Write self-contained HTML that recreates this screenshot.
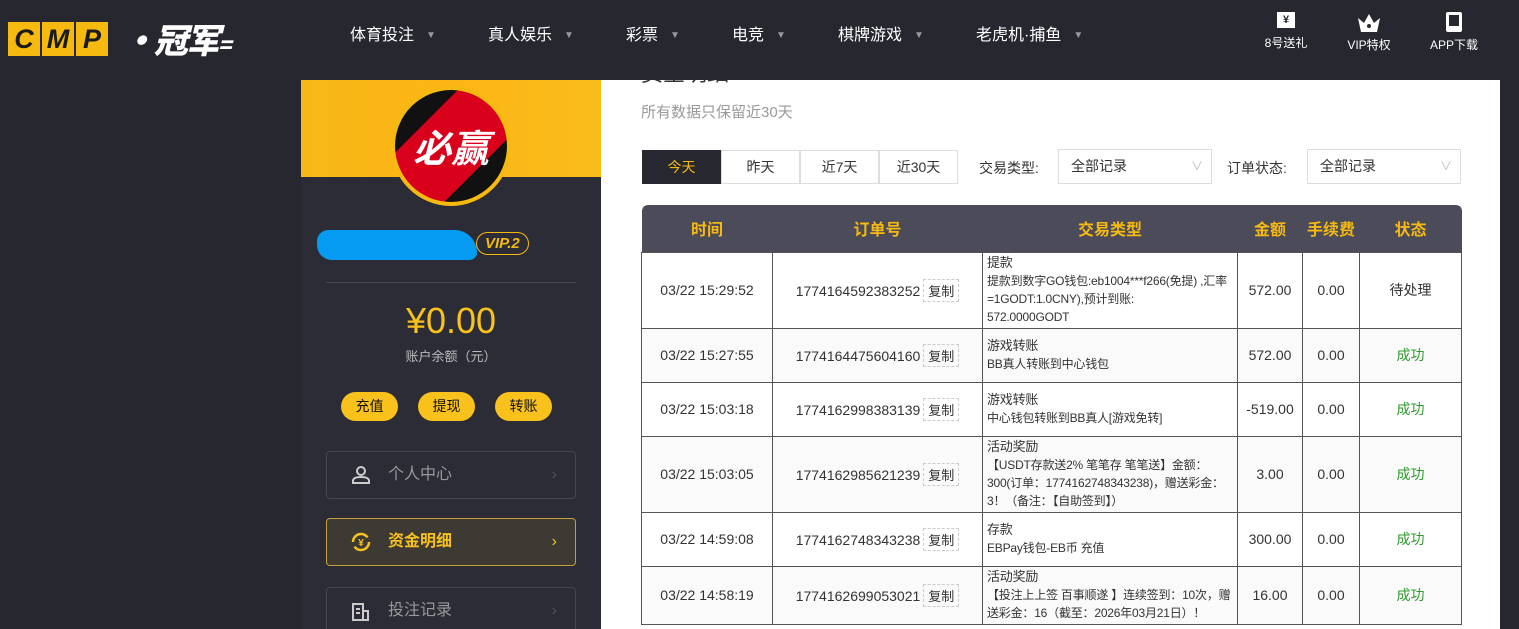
<!DOCTYPE html>
<html><head><meta charset="utf-8"><style>
*{margin:0;padding:0;box-sizing:border-box}
body{width:1519px;height:629px;overflow:hidden;background:#26272f;font-family:"Liberation Sans","Noto Sans CJK SC",sans-serif;position:relative}
.hdr{position:absolute;left:0;top:0;width:1519px;height:80px;background:#26272f;z-index:5}
.logo{position:absolute;left:8px;top:14px;display:flex;align-items:center}
.logo span.b{display:inline-block;width:32px;height:34px;background:#f5b910;margin-right:2px;color:#1a1a1a;font:italic bold 27px "Liberation Sans",sans-serif;text-align:center;line-height:34px}
.logo .t{color:#fff;font:italic 900 34px "Noto Sans CJK SC",sans-serif;margin-left:12px;letter-spacing:-2px}
.nav{position:absolute;top:21px;color:#fff;font-size:16px}
.nav i{font-style:normal;color:#999;font-size:10px;margin-left:12px;vertical-align:2px}
.ri{position:absolute;top:12px;color:#fff;font-size:12px;text-align:center;width:70px}
.side{position:absolute;left:301px;top:80px;width:300px;height:549px;background:#2b2c35;overflow:hidden}
.ban{height:97px;background:linear-gradient(90deg,#f7b817,#fdb515 50%,#f9bd1b)}
.av{position:absolute;left:90px;top:6px;width:120px;height:120px;border-radius:50%;background:#f5b910;padding:4px}
.av div{width:112px;height:112px;border-radius:50%;background:linear-gradient(135deg,#111 0 28%,#d9001b 28% 72%,#111 72%);color:#fff;font:italic bold 38px "Noto Sans CJK SC",sans-serif;text-align:center;line-height:112px}
.name{position:absolute;left:16px;top:150px;width:160px;height:30px;background:#069bf3;border-radius:15px 30px 10px 20px}
.vip{position:absolute;left:175px;top:152px;border:1px solid #f5b910;border-radius:12px;color:#f5b910;font:italic bold 15px "Liberation Sans";padding:2px 8px}
.line{position:absolute;left:25px;top:202px;width:250px;height:1px;background:#45464f}
.bal{position:absolute;left:0;width:300px;text-align:center}
.btn{position:absolute;top:312px;width:57px;height:29px;border-radius:15px;background:#f8c11c;font-size:14px;line-height:29px;text-align:center;color:#111}
.mi{position:absolute;left:25px;width:250px;height:48px;border:1px solid #45464f;border-radius:4px;color:#999;font-size:16px;line-height:46px;padding-left:61px}
.mi b{position:absolute;right:18px;font-weight:normal;color:#555}
.main{position:absolute;left:601px;top:80px;width:899px;height:549px;background:#fff;overflow:hidden}
.tt{position:absolute;left:40px;top:-24px;font-size:22px;color:#333}
.sub{position:absolute;left:40px;top:21px;font-size:15px;color:#999}
.tab{position:absolute;top:70px;height:34px;width:79px;border:1px solid #ddd;text-align:center;line-height:32px;font-size:14px;color:#333}
.lbl{position:absolute;top:78px;font-size:14px;color:#333}
.sel{position:absolute;top:69px;width:154px;height:35px;border:1px solid #ddd;font-size:14px;color:#333;line-height:33px;padding-left:12px}
.sel:after{content:"\2228";position:absolute;right:8px;color:#bbb;font-size:12px}
table{position:absolute;left:40px;top:125px;width:821px;border-collapse:collapse;font-size:14px;color:#333}
th{background:#4b4b59;color:#f5b910;font-size:16px;height:47px;font-weight:bold}
td{border:1px solid #555;text-align:center}
td.d{text-align:left;font-size:12px;line-height:18px;padding:1px 4px;letter-spacing:-0.2px}
td.d span{font-size:13px}
.cp{display:inline-block;border:1px dashed #ccc;padding:1px 4px;margin-left:3px;font-size:13px}
.ok{color:#2d9b2d}
</style></head><body>
<div class="hdr">
<div class="logo"><span class="b">C</span><span class="b">M</span><span class="b">P</span><span class="t">·冠军<span style="font-size:22px">=</span></span></div>
<div class="nav" style="left:350px">体育投注<i>▼</i></div>
<div class="nav" style="left:488px">真人娱乐<i>▼</i></div>
<div class="nav" style="left:626px">彩票<i>▼</i></div>
<div class="nav" style="left:732px">电竞<i>▼</i></div>
<div class="nav" style="left:838px">棋牌游戏<i>▼</i></div>
<div class="nav" style="left:976px">老虎机·捕鱼<i>▼</i></div>
<div class="ri" style="left:1251px"><div style="width:18px;height:16px;background:#fff;margin:0 auto 6px;color:#26272f;font-size:11px;line-height:16px;font-weight:bold">¥</div>8号送礼</div>
<div class="ri" style="left:1334px"><svg width="26" height="22" viewBox="0 0 26 22" style="display:block;margin:0 auto 2px"><path d="M2 6l6 5 5-9 5 9 6-5-3 14H5z" fill="#fff"/><circle cx="13" cy="14" r="2" fill="#26272f"/></svg>VIP特权</div>
<div class="ri" style="left:1419px"><div style="width:16px;height:20px;border:3px solid #fff;border-bottom-width:6px;margin:0 auto 4px;border-radius:2px"></div>APP下载</div>
</div>
<div class="side">
<div class="ban"></div>
<div class="av"><div>必赢</div></div>
<div class="name"></div>
<div class="vip">VIP.2</div>
<div class="line"></div>
<div class="bal" style="top:220px;color:#f8c11c;font-size:36px">¥0.00</div>
<div class="bal" style="top:266px;color:#bbb;font-size:13px">账户余额（元）</div>
<div class="btn" style="left:40px">充值</div>
<div class="btn" style="left:117px">提现</div>
<div class="btn" style="left:194px">转账</div>
<div class="mi" style="top:371px"><svg width="20" height="20" viewBox="0 0 20 20" style="position:absolute;left:24px;top:13px"><circle cx="10" cy="6" r="4" fill="none" stroke="#ccc" stroke-width="2"/><path d="M2 18v-2c0-3 3-4 8-4s8 1 8 4v2z" fill="none" stroke="#ccc" stroke-width="2"/></svg>个人中心<b>›</b></div>
<div class="mi" style="top:438px;border-color:#c9a035;background:#3c3a33;color:#f8c11c;font-weight:bold"><svg width="22" height="22" viewBox="0 0 22 22" style="position:absolute;left:23px;top:12px"><circle cx="11" cy="11" r="8" fill="none" stroke="#f8c11c" stroke-width="2.5" stroke-dasharray="20 5"/><text x="11" y="15" font-size="10" text-anchor="middle" fill="#f8c11c">¥</text></svg>资金明细<b style="color:#f8c11c">›</b></div>
<div class="mi" style="top:507px"><svg width="20" height="20" viewBox="0 0 20 20" style="position:absolute;left:24px;top:14px"><path d="M2 2h10v16H2zM12 9h5v9h-5M5 7h4M5 11h4" fill="none" stroke="#ccc" stroke-width="2"/></svg>投注记录<b>›</b></div>
</div>
<div class="main">
<div class="tt">资金明细</div>
<div class="sub">所有数据只保留近30天</div>
<div class="tab" style="left:41px;background:#26272f;color:#f5b910;border-color:#26272f">今天</div>
<div class="tab" style="left:120px">昨天</div>
<div class="tab" style="left:199px">近7天</div>
<div class="tab" style="left:278px">近30天</div>
<div class="lbl" style="left:378px">交易类型:</div>
<div class="sel" style="left:457px">全部记录</div>
<div class="lbl" style="left:626px">订单状态:</div>
<div class="sel" style="left:706px">全部记录</div>
<table>
<colgroup><col style="width:131px"><col style="width:210px"><col style="width:255px"><col style="width:65px"><col style="width:57px"><col></colgroup>
<tr><th style="border-radius:6px 0 0 0">时间</th><th>订单号</th><th>交易类型</th><th>金额</th><th>手续费</th><th style="border-radius:0 6px 0 0">状态</th></tr>
<tr style="height:76px"><td>03/22 15:29:52</td><td>1774164592383252<span class="cp">复制</span></td><td class="d"><span>提款</span><br>提款到数字GO钱包:eb1004***f266(免提) ,汇率=1GODT:1.0CNY),预计到账:<br>572.0000GODT</td><td>572.00</td><td>0.00</td><td>待处理</td></tr>
<tr style="height:54px;background:#fafafa"><td>03/22 15:27:55</td><td>1774164475604160<span class="cp">复制</span></td><td class="d"><span>游戏转账</span><br>BB真人转账到中心钱包</td><td>572.00</td><td>0.00</td><td class="ok">成功</td></tr>
<tr style="height:54px"><td>03/22 15:03:18</td><td>1774162998383139<span class="cp">复制</span></td><td class="d"><span>游戏转账</span><br>中心钱包转账到BB真人[游戏免转]</td><td>-519.00</td><td>0.00</td><td class="ok">成功</td></tr>
<tr style="height:76px;background:#fafafa"><td>03/22 15:03:05</td><td>1774162985621239<span class="cp">复制</span></td><td class="d"><span>活动奖励</span><br>【USDT存款送2% 笔笔存 笔笔送】金额：300(订单：1774162748343238)，赠送彩金：3！（备注：【自助签到】）</td><td>3.00</td><td>0.00</td><td class="ok">成功</td></tr>
<tr style="height:54px"><td>03/22 14:59:08</td><td>1774162748343238<span class="cp">复制</span></td><td class="d"><span>存款</span><br>EBPay钱包-EB币 充值</td><td>300.00</td><td>0.00</td><td class="ok">成功</td></tr>
<tr style="height:58px;background:#fafafa"><td>03/22 14:58:19</td><td>1774162699053021<span class="cp">复制</span></td><td class="d"><span>活动奖励</span><br>【投注上上签 百事顺遂 】连续签到：10次，赠送彩金：16（截至：2026年03月21日）！</td><td>16.00</td><td>0.00</td><td class="ok">成功</td></tr>
</table>
</div>
</body></html>
